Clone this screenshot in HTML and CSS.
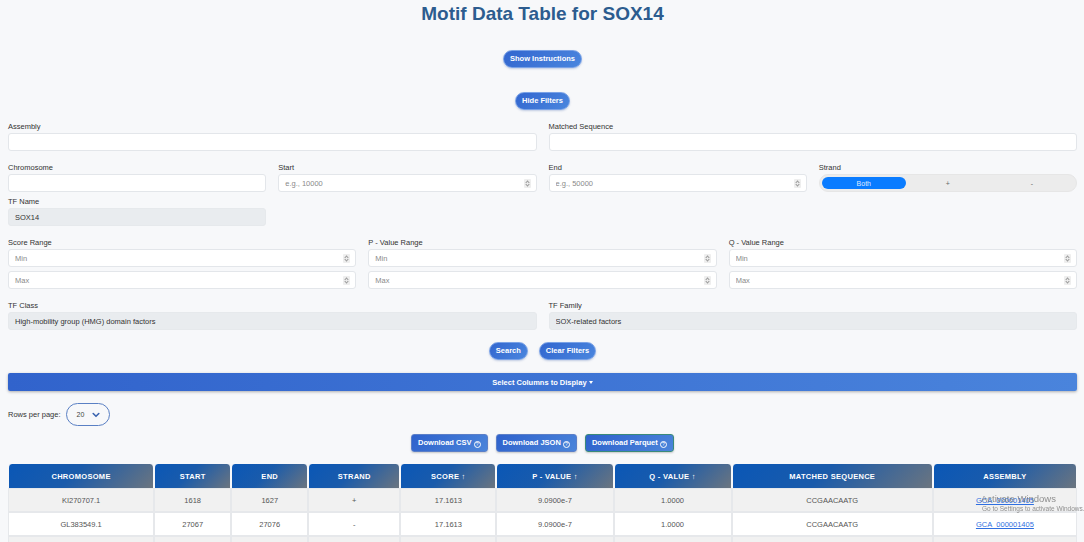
FILE: index.html
```html
<!DOCTYPE html>
<html lang="en">
<head>
<meta charset="utf-8">
<title>Motif Data Table for SOX14</title>
<link rel="stylesheet" href="styles.css">
</head>
<body>
<div class="page">
  <h1 class="title">Motif Data Table for SOX14</h1>

  <div class="center-row row-instr"><button class="pill-btn">Show Instructions</button></div>
  <div class="center-row row-hide"><button class="pill-btn">Hide Filters</button></div>

  <section class="filters">
    <div class="grid g2">
      <div class="field"><label>Assembly</label><div class="box"><input type="text"></div></div>
      <div class="field"><label>Matched Sequence</label><div class="box"><input type="text"></div></div>
    </div>

    <div class="grid g4">
      <div class="field"><label>Chromosome</label><div class="box"><input type="text"></div></div>
      <div class="field"><label>Start</label><div class="box"><input type="text" placeholder="e.g., 10000"><span class="spin"></span></div></div>
      <div class="field"><label>End</label><div class="box"><input type="text" placeholder="e.g., 50000"><span class="spin"></span></div></div>
      <div class="field"><label>Strand</label>
        <div class="toggle">
          <span class="seg active">Both</span>
          <span class="seg">+</span>
          <span class="seg">-</span>
        </div>
      </div>
      <div class="field"><label>TF Name</label><div class="box ro"><input type="text" value="SOX14" readonly></div></div>
    </div>

    <div class="grid g3">
      <div class="field"><label>Score Range</label>
        <div class="box"><input type="text" placeholder="Min"><span class="spin"></span></div>
        <div class="box second"><input type="text" placeholder="Max"><span class="spin"></span></div>
      </div>
      <div class="field"><label>P - Value Range</label>
        <div class="box"><input type="text" placeholder="Min"><span class="spin"></span></div>
        <div class="box second"><input type="text" placeholder="Max"><span class="spin"></span></div>
      </div>
      <div class="field"><label>Q - Value Range</label>
        <div class="box"><input type="text" placeholder="Min"><span class="spin"></span></div>
        <div class="box second"><input type="text" placeholder="Max"><span class="spin"></span></div>
      </div>
    </div>

    <div class="grid g2">
      <div class="field"><label>TF Class</label><div class="box ro"><input type="text" value="High-mobility group (HMG) domain factors" readonly></div></div>
      <div class="field"><label>TF Family</label><div class="box ro"><input type="text" value="SOX-related factors" readonly></div></div>
    </div>
  </section>

  <div class="center-row row-search">
    <button class="pill-btn">Search</button>
    <button class="pill-btn">Clear Filters</button>
  </div>

  <button class="columns-bar">Select Columns to Display <span class="caret"></span></button>

  <div class="rows-row">
    <span class="rows-label">Rows per page:</span>
    <div class="rows-select"><span>20</span>
      <svg class="chev" width="8" height="6" viewBox="0 0 8 6"><path d="M1.2 1.5 L4 4.3 L6.8 1.5" fill="none" stroke="#3a64b0" stroke-width="1.6" stroke-linecap="round" stroke-linejoin="round"/></svg>
    </div>
  </div>

  <div class="center-row row-dl">
    <button class="dl-btn">Download CSV <span class="q">?</span></button>
    <button class="dl-btn">Download JSON <span class="q">?</span></button>
    <button class="dl-btn parquet">Download Parquet <span class="q">?</span></button>
  </div>

  <table class="data">
    <colgroup>
      <col style="width:146px"><col style="width:77px"><col style="width:77px"><col style="width:92px"><col style="width:96px"><col style="width:117px"><col style="width:118px"><col style="width:201px"><col style="width:144px">
    </colgroup>
    <thead>
      <tr>
        <th>Chromosome</th><th>Start</th><th>End</th><th>Strand</th><th>Score ↑</th><th>P - Value ↑</th><th>Q - Value ↑</th><th>Matched Sequence</th><th>Assembly</th>
      </tr>
    </thead>
    <tbody>
      <tr class="odd">
        <td>KI270707.1</td><td>1618</td><td>1627</td><td>+</td><td>17.1613</td><td>9.0900e-7</td><td>1.0000</td><td>CCGAACAATG</td><td><a href="#">GCA_000001405</a></td>
      </tr>
      <tr>
        <td>GL383549.1</td><td>27067</td><td>27076</td><td>-</td><td>17.1613</td><td>9.0900e-7</td><td>1.0000</td><td>CCGAACAATG</td><td><a href="#">GCA_000001405</a></td>
      </tr>
      <tr class="odd">
        <td></td><td></td><td></td><td></td><td></td><td></td><td></td><td></td><td></td>
      </tr>
    </tbody>
  </table>
</div>

<div class="watermark">
  <div class="wm-1">Activate Windows</div>
  <div class="wm-2">Go to Settings to activate Windows.</div>
</div>
</body>
</html>
```

FILE: styles.css
```css
* { box-sizing: border-box; }

html, body {
  margin: 0;
  padding: 0;
  background: #f7f8fa;
  font-family: "Liberation Sans", Arial, sans-serif;
  color: #333;
  overflow: hidden;
}

.page {
  padding: 0 7px 0 8px;
}

.title {
  margin: 0;
  padding-top: 3px;
  font-size: 19px;
  line-height: 22px;
  font-weight: bold;
  color: #2c5c8f;
  text-align: center;
}

.center-row {
  display: flex;
  justify-content: center;
  gap: 11px;
}
.row-instr { margin-top: 25px; }
.row-hide { margin-top: 24px; }
.row-search { margin-top: 12px; }
.row-dl { margin-top: 8px; gap: 8px; }

.pill-btn {
  height: 18px;
  padding: 0 6px;
  border: 1px solid #7aa2e6;
  border-radius: 10px;
  background: linear-gradient(135deg, #3266cf 0%, #4a86de 100%);
  color: #fff;
  font-family: inherit;
  font-size: 7.5px;
  font-weight: bold;
  line-height: 16px;
  box-shadow: 0 1px 2px rgba(40, 80, 160, 0.25);
}

.filters {
  margin-top: 12px;
}

.grid {
  display: grid;
  column-gap: 12px;
  row-gap: 5px;
  margin-bottom: 12px;
}
.g2 { grid-template-columns: 1fr 1fr; }
.g3 { grid-template-columns: 1fr 1fr 1fr; }
.g4 { grid-template-columns: 1fr 1fr 1fr 1fr; }

.field label {
  display: block;
  font-size: 7.5px;
  line-height: 10px;
  margin-bottom: 1px;
  color: #333;
}

.box {
  display: flex;
  align-items: center;
  height: 18px;
  border: 1px solid #e3e6ea;
  border-radius: 3px;
  background: #fff;
  padding: 0 6px;
}
.box.second { margin-top: 4px; }
.box.ro {
  background: #e9ecef;
  border-color: #e6e9ec;
}

.box input {
  flex: 1;
  min-width: 0;
  border: 0;
  outline: 0;
  background: transparent;
  padding: 0;
  font-family: inherit;
  font-size: 7.5px;
  color: #333;
}
.box input::placeholder { color: #8a8a8a; }

.spin {
  width: 7px;
  height: 9px;
  margin-right: -1px;
  border-radius: 1px;
  background: #eeeeee;
  position: relative;
}
.spin::before, .spin::after {
  content: "";
  position: absolute;
  left: 2px;
  width: 2px;
  height: 2px;
  border-left: 0.8px solid #9a9a9a;
  border-top: 0.8px solid #9a9a9a;
}
.spin::before { top: 2px; transform: rotate(45deg); }
.spin::after { top: 4.5px; transform: rotate(225deg); }

.toggle {
  display: flex;
  height: 18px;
  padding: 2px;
  background: #ececec;
  border: 1px solid #e6e6e6;
  border-radius: 10px;
}
.seg {
  flex: 1;
  display: flex;
  align-items: center;
  justify-content: center;
  font-size: 7px;
  color: #666;
  border-radius: 8px;
}
.seg.active {
  background: #0a7cff;
  color: #dfeaff;
}

.columns-bar {
  display: block;
  width: 100%;
  height: 18px;
  margin-top: 13px;
  border: 0;
  border-radius: 2px;
  background: linear-gradient(90deg, #3163cc 0%, #4a84dc 100%);
  color: #fff;
  font-family: inherit;
  font-size: 7.5px;
  font-weight: bold;
  box-shadow: 0 1px 3px rgba(0, 0, 0, 0.3);
}
.caret {
  display: inline-block;
  width: 0;
  height: 0;
  border-left: 2.5px solid transparent;
  border-right: 2.5px solid transparent;
  border-top: 3px solid #fff;
  vertical-align: 1px;
}

.rows-row {
  display: flex;
  align-items: center;
  gap: 5px;
  margin-top: 12px;
  height: 23px;
}
.rows-label {
  font-size: 7.5px;
  color: #333;
}
.rows-select {
  display: flex;
  align-items: center;
  justify-content: space-between;
  width: 44px;
  height: 23px;
  padding: 0 9px 0 10px;
  border: 1.5px solid #5a80c4;
  border-radius: 12px;
  font-size: 7px;
  color: #444;
}

.dl-btn {
  height: 18px;
  padding: 0 6px;
  border: 1px solid #5b7fc8;
  border-radius: 3px;
  background: linear-gradient(135deg, #2f62cc 0%, #4a84da 100%);
  color: #fff;
  font-family: inherit;
  font-size: 7.5px;
  font-weight: bold;
  box-shadow: 0 1px 2px rgba(0, 0, 0, 0.2);
}
.dl-btn.parquet { border-color: #3a8a7a; }
.q {
  display: inline-flex;
  align-items: center;
  justify-content: center;
  width: 7px;
  height: 7px;
  border: 0.8px solid #fff;
  border-radius: 50%;
  font-size: 5px;
  font-weight: normal;
  vertical-align: -1px;
}

.data {
  margin-top: 12px;
  width: 1069px;
  table-layout: fixed;
  border-collapse: separate;
  border-spacing: 0;
  font-size: 7.5px;
}
.data th {
  height: 24px;
  padding: 0;
  background: linear-gradient(135deg, #0a57b6 0%, #1a5bab 45%, #6b7580 100%);
  color: #fff;
  font-weight: bold;
  text-transform: uppercase;
  letter-spacing: 0.3px;
  border-left: 1px solid #f7f8fa;
  border-right: 1px solid #f7f8fa;
  border-radius: 4px 4px 0 0;
}
.data td {
  height: 24px;
  padding: 0;
  text-align: center;
  color: #555;
  background: #fff;
  border: 1px solid #e6e8eb;
}
.data tr.odd td { background: #f1f1f1; }
.data a {
  color: #2f6fe0;
  text-decoration: underline;
}

.watermark {
  position: fixed;
  left: 981px;
  top: 493px;
  white-space: nowrap;
  color: rgba(110, 110, 110, 0.75);
  pointer-events: none;
}
.wm-1 { font-size: 9.5px; line-height: 11px; }
.wm-2 { font-size: 6.5px; line-height: 9px; margin-left: 1px; }
```
